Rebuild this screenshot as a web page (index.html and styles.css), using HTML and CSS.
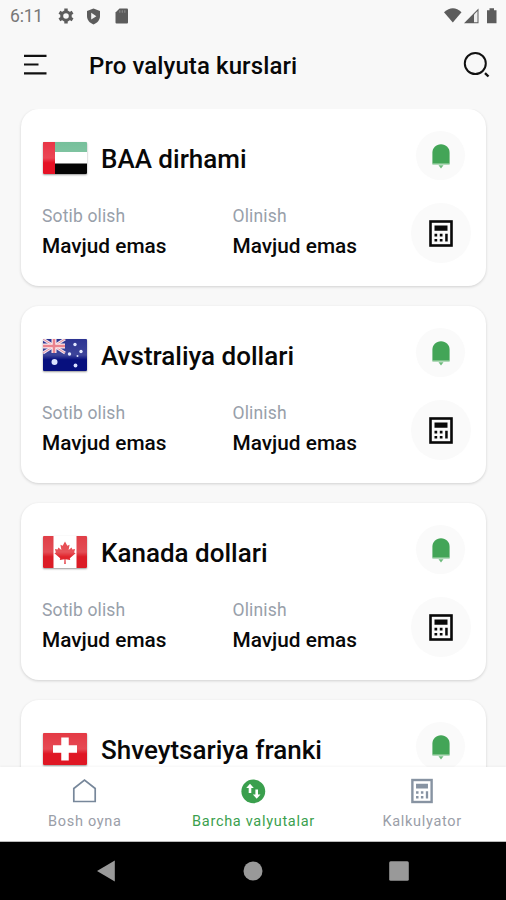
FILE: index.html
```html
<!DOCTYPE html>
<html lang="uz">
<head>
<meta charset="utf-8">
<title>Pro valyuta kurslari</title>
<link rel="stylesheet" href="styles.css">
</head>
<body>
<svg class="defs" aria-hidden="true">
  <symbol id="bell" viewBox="0 0 20 26"><path d="M1.400 20.600V9.700C1.400 4.800 5 1.200 10 1.200s8.600 3.600 8.600 8.500v10.900z" fill="#43a557"/><path d="M1.400 20.300h17.200v1.200H1.400z" fill="#6dbb7c"/><path d="M7.500 22.200h5L10 25.600z" fill="#6dbb7c"/></symbol>
  <symbol id="calc" viewBox="0 0 24 27"><rect x="1.500" y="1.500" width="21" height="24" fill="none" stroke="currentColor" stroke-width="2.600"/><path d="M5.500 5.500h13v5.300h-13zM5.500 13.800h2.700v2.600H5.500zM10.800 13.800h2.700v2.600h-2.700zM5.500 19h2.700v2.600H5.500zM10.800 19h2.700v2.600h-2.700zM16.200 13.800h2.500v7.800h-2.500z" fill="currentColor"/></symbol>
  <linearGradient id="gloss" x1="0" y1="0" x2="0" y2="1"><stop offset="0" stop-color="#fff" stop-opacity=".15"/><stop offset=".5" stop-color="#fff" stop-opacity=".22"/><stop offset=".65" stop-color="#fff" stop-opacity="0"/></linearGradient>
</svg>
<header class="status">
  <span class="time">6:11</span>
  <svg class="gear" width="16" height="16" viewBox="0 0 16 16"><circle cx="8" cy="8" r="4.300" fill="none" stroke="#5c5c5c" stroke-width="3"/><path d="M8 .4v3M8 12.600v3M1.400 4.200l2.600 1.500M12 10.300l2.600 1.500M1.400 11.800L4 10.300M12 5.700l2.600-1.500" stroke="#5c5c5c" stroke-width="3.400"/></svg>
  <svg class="shield" width="15" height="17" viewBox="0 0 15 17"><path d="M7.500.5L14 3v5c0 4-2.700 7-6.500 8.400C3.700 15 1 12 1 8V3z" fill="#5c5c5c"/><path d="M5.200 4.800l5.200 3.400-5.200 3.400z" fill="#f2f2f2"/></svg>
  <svg class="sd" width="13" height="16" viewBox="0 0 13 16"><path d="M4.500.5H12a1 1 0 0 1 1 1v13a1 1 0 0 1-1 1H1.500a1 1 0 0 1-1-1v-10z" fill="#5c5c5c"/><path d="M4.800 2.200v2.600M7.300 2.200v2.600M9.800 2.200v2.600" stroke="#888" stroke-width="1.200"/></svg>
  <svg class="signals" width="56" height="18" viewBox="0 0 56 18"><path d="M1 5.200Q10 -2.500 18.500 5.200L9.800 15.500z" fill="#5c5c5c"/><path d="M21 16.200L35.500 1.500V16.200z" fill="#5c5c5c"/><path d="M31 7.500l3.500-3.500v11.200H31z" fill="#ededed"/><path d="M44 3.200h2.500V1.200h4.500v2h2.500v13H44z" fill="#5c5c5c"/></svg>
</header>
<div class="toolbar">
  <svg class="menu" width="24" height="22" viewBox="0 0 24 22"><path d="M1 1.800h22.500M1 10.500h14.500M1 19.300h22.500" stroke="#111" stroke-width="2.200"/></svg>
  <h1>Pro valyuta kurslari</h1>
  <svg class="search" width="28" height="28" viewBox="0 0 28 28"><circle cx="12.300" cy="12.500" r="10.500" fill="none" stroke="#111" stroke-width="2"/><path d="M22 22.200l3.500 3.300" stroke="#111" stroke-width="2.400"/></svg>
</div>
<main class="list">
  <article class="card">
    <div class="currency">
      <svg class="flag" viewBox="0 0 44 32"><path fill="#fff" d="M0 0h44v32H0z"/><path fill="#5fb58a" d="M0 0h44v10H0z"/><path fill="#e51225" d="M0 0h12v32H0z"/><path fill="url(#gloss)" d="M0 0h44v32H0z"/><path fill="#050505" d="M12 21.500h32V32H12z"/></svg>
      <h2>BAA dirhami</h2><button class="alert"><svg><use href="#bell"/></svg></button>
    </div>
    <div class="rates"><dl><dt>Sotib olish</dt><dd>Mavjud emas</dd></dl><dl><dt>Olinish</dt><dd>Mavjud emas</dd></dl><button class="convert"><svg><use href="#calc"/></svg></button></div>
  </article>
  <article class="card">
    <div class="currency">
      <svg class="flag" viewBox="0 0 44 32"><path fill="#07107e" d="M0 0h44v32H0z"/><path d="M0 0l22 14M22 0L0 14" stroke="#e8dbea" stroke-width="3"/><path d="M0 0l22 14M22 0L0 14" stroke="#e67886" stroke-width="1"/><path d="M11 0v14M0 7h22" stroke="#fae5e9" stroke-width="5"/><path d="M11 0v14M0 7h22" stroke="#e66876" stroke-width="2.500"/><g fill="#dbe2ff"><circle cx="11.500" cy="23" r="3"/><circle cx="32" cy="5.500" r="1.700"/><circle cx="26.500" cy="15" r="1.700"/><circle cx="38" cy="12.500" r="1.700"/><circle cx="32.500" cy="26.500" r="1.900"/><circle cx="34.500" cy="17" r="1"/></g><path fill="url(#gloss)" d="M0 0h44v32H0z"/></svg>
      <h2>Avstraliya dollari</h2><button class="alert"><svg><use href="#bell"/></svg></button>
    </div>
    <div class="rates"><dl><dt>Sotib olish</dt><dd>Mavjud emas</dd></dl><dl><dt>Olinish</dt><dd>Mavjud emas</dd></dl><button class="convert"><svg><use href="#calc"/></svg></button></div>
  </article>
  <article class="card">
    <div class="currency">
      <svg class="flag" viewBox="0 0 44 32"><path fill="#fff" d="M0 0h44v32H0z"/><path fill="#db1c26" d="M0 0h10.500v32H0zM33.500 0H44v32H33.500z"/><path fill="#e1242c" d="M22 5.500l2.300 4.300 2.300-1-1 5.200 3-2.500.8 2 2.700-.5-1 3.500 1.500.8-5.800 5 .4 1.700-4.700-.7.2 4.700h-1.400l.2-4.700-4.700.7.400-1.700-5.800-5 1.500-.8-1-3.500 2.700.5.800-2 3 2.500-1-5.200 2.300 1z"/><path fill="url(#gloss)" d="M0 0h44v32H0z"/></svg>
      <h2>Kanada dollari</h2><button class="alert"><svg><use href="#bell"/></svg></button>
    </div>
    <div class="rates"><dl><dt>Sotib olish</dt><dd>Mavjud emas</dd></dl><dl><dt>Olinish</dt><dd>Mavjud emas</dd></dl><button class="convert"><svg><use href="#calc"/></svg></button></div>
  </article>
  <article class="card">
    <div class="currency">
      <svg class="flag" viewBox="0 0 44 32"><path fill="#df1724" d="M0 0h44v32H0z"/><path fill="url(#gloss)" d="M0 0h44v32H0z"/><path d="M22 4.500v23M10 16h24" stroke="#fff" stroke-width="7.500"/></svg>
      <h2>Shveytsariya franki</h2><button class="alert"><svg><use href="#bell"/></svg></button>
    </div>
  </article>
</main>
<nav class="tabs">
  <a class="tab"><svg width="26" height="26" viewBox="0 0 26 26"><path d="M2.800 10.500L13.500 2.200l10.700 8.300v13H2.800z" fill="none" stroke="#77879a" stroke-width="1.700"/></svg><span>Bosh oyna</span></a>
  <a class="tab active"><svg width="26" height="26" viewBox="0 0 26 26"><circle cx="13.300" cy="13.300" r="11.900" fill="#3a9f4d"/><path d="M10 5.800L13.800 10h-2.500v5H8.700v-5H6.200zM16.700 20.700l3.800-4.200H18v-5h-2.600v5h-2.500z" fill="#fff"/></svg><span>Barcha valyutalar</span></a>
  <a class="tab"><svg class="tabcalc" width="22" height="26"><use href="#calc"/></svg><span>Kalkulyator</span></a>
</nav>
<footer class="system">
  <svg width="20" height="22" viewBox="0 0 20 22"><path d="M1 11L18.800.500v21z" fill="#999"/></svg>
  <svg width="20" height="20" viewBox="0 0 20 20"><circle cx="10" cy="10" r="9.500" fill="#999"/></svg>
  <svg width="20" height="20" viewBox="0 0 20 20"><rect x=".2" y=".2" width="19.600" height="19.600" rx="1.500" fill="#999"/></svg>
</footer>
</body>
</html>
```
FILE: styles.css
```css
* { box-sizing: border-box; }
body { margin: 0; height: 900px; overflow: hidden; display: flex; flex-direction: column; background: #f8f8f8; color: #080808; font-family: Roboto, sans-serif; }
h1, h2, dl, dd { margin: 0; }
h1, h2, dd { font-weight: 500; }
button { border: 0; padding: 0; display: flex; align-items: center; justify-content: center; border-radius: 50%; background: #fafafa; color: #080808; }
.defs { position: absolute; width: 0; height: 0; }
.status { height: 32px; flex: none; display: flex; align-items: center; padding: 0 7px 0 10px; color: #777; }
.time { font-size: 17.5px; width: 48px; line-height: 32px; letter-spacing: -.2px; }
.shield { margin-left: 12px; }
.sd { margin-left: 14px; }
.signals { margin-left: auto; }
.toolbar { height: 77px; flex: none; display: flex; align-items: center; padding: 0 15px 11px 23px; }
.toolbar h1 { font-size: 24px; letter-spacing: .1px; margin-left: 42px; line-height: 30px; padding-top: 2px; white-space: nowrap; }
.search { margin-left: auto; }
.list { flex: 1; min-height: 0; overflow: hidden; padding: 0 20px 0 21px; display: flex; flex-direction: column; gap: 20px; }
.card { height: 177px; flex: none; border-radius: 18px; background: #fff; box-shadow: 0 1px 3px rgba(0,0,0,.16); padding: 22px 15px 0 21px; }
.currency { display: flex; align-items: flex-start; height: 50px; padding-right: 6px; }
.flag { width: 44px; height: 32px; margin: 11px 0 0 1px; border-radius: 1px; box-shadow: 0 1px 2px rgba(0,0,0,.4); }
.currency h2 { font-size: 26px; line-height: 30px; margin: 13px 0 0 14px; flex: 1; white-space: nowrap; }
.alert { width: 49px; height: 49px; }
.alert svg { width: 20px; height: 26px; }
.rates { display: flex; margin-top: 22px; }
.rates dl { width: 190.5px; }
.rates dt { font-size: 17.5px; letter-spacing: .15px; line-height: 22px; margin-top: 2px; color: #98a0aa; }
.rates dd { font-size: 20.8px; line-height: 26px; margin-top: 6px; }
.convert { width: 60px; height: 60px; margin-left: auto; flex: none; }
.rates dl + dl { width: 170px; }
.convert svg { width: 24px; height: 27px; }
.tabs { height: 75px; flex: none; background: #fff; display: grid; grid-template-columns: repeat(3, 1fr); box-shadow: 0 -1px 2px rgba(0,0,0,.04); border-bottom: 1px solid #bbb; position: relative; }
.tab { display: flex; flex-direction: column; align-items: center; padding-top: 11px; font-size: 14.5px; letter-spacing: .7px; color: #9a9ea8; }
.tab svg { height: 26px; }
.tab span { line-height: 18px; margin-top: 9px; padding-left: 1px; }
.tab.active { color: #3a9f4d; }
.tabcalc { color: #8793a2; }
.system { height: 58px; flex: none; background: #000; display: flex; align-items: center; justify-content: space-between; padding: 0 97px 0 96px; }
```
